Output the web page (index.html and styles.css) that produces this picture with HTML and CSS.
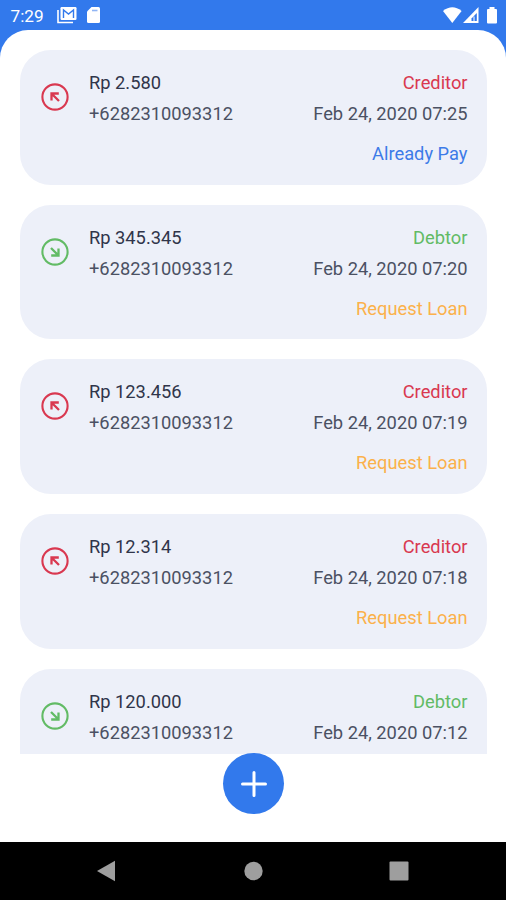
FILE: index.html
```
<!DOCTYPE html>
<html lang="en">
<head>
<meta charset="utf-8">
<title>Loans</title>
<link rel="stylesheet" href="styles.css">
</head>
<body>
<svg width="0" height="0" class="defs" aria-hidden="true">
  <symbol id="arrow" viewBox="0 0 28 28">
    <circle cx="14" cy="14" r="12.6" fill="none" stroke="currentColor" stroke-width="2.1"/>
    <path d="M17.800 10.500H10.500V17.600M10.700 10.700L18 18" fill="none" stroke="currentColor" stroke-width="2.300"/>
  </symbol>
</svg>
<header class="status">
  <span class="clock">7:29</span>
  <svg class="mail" width="20" height="17" viewBox="0 0 20 17"><path d="M1 3V15.500H16" fill="none" stroke="#fff" stroke-width="1.600"/><rect x="3.500" y="0" width="16" height="13" rx="1.200" fill="#fff"/><path d="M6.500 11V3L11.500 7L16.500 3V11" fill="none" stroke="#3279ec" stroke-width="1.400"/></svg>
  <svg class="sd" width="13" height="17" viewBox="0 0 13 17"><path d="M4.500 0H11.500Q13 0 13 1.500V14.500Q13 16 11.500 16H1.500Q0 16 0 14.500V4.500Z" fill="#fff"/><path d="M5 3.500H10.500" stroke="#91b5f4" stroke-width="1.600"/></svg>
  <svg class="signals" width="55" height="18" viewBox="0 0 55 18"><path d="M0 4Q9.300 -3.500 18.600 4L9.300 16Z" fill="#fff"/><path d="M35.500 0V16H20Z" fill="#fff"/><path d="M33.800 6V14H28.500V11.500Z" fill="#3279ec"/><path d="M31 9.500V14" stroke="#fff" stroke-width="1"/><path d="M46.500 0H51.500V2H53Q54 2 54 3V15.500Q54 16.500 53 16.500H45Q44 16.500 44 15.500V3Q44 2 45 2H46.500Z" fill="#fff"/></svg>
</header>
<main class="sheet">
  <div class="list">
    <article class="card">
      <svg class="icon red"><use href="#arrow"/></svg>
      <div class="rows">
        <div class="row"><span class="amount">Rp 2.580</span><span class="red">Creditor</span></div>
        <div class="row"><span>+6282310093312</span><span>Feb 24, 2020 07:25</span></div>
        <div class="row action blue">Already Pay</div>
      </div>
    </article>
    <article class="card">
      <svg class="icon green down"><use href="#arrow"/></svg>
      <div class="rows">
        <div class="row"><span class="amount">Rp 345.345</span><span class="green">Debtor</span></div>
        <div class="row"><span>+6282310093312</span><span>Feb 24, 2020 07:20</span></div>
        <div class="row action orange">Request Loan</div>
      </div>
    </article>
    <article class="card">
      <svg class="icon red"><use href="#arrow"/></svg>
      <div class="rows">
        <div class="row"><span class="amount">Rp 123.456</span><span class="red">Creditor</span></div>
        <div class="row"><span>+6282310093312</span><span>Feb 24, 2020 07:19</span></div>
        <div class="row action orange">Request Loan</div>
      </div>
    </article>
    <article class="card">
      <svg class="icon red"><use href="#arrow"/></svg>
      <div class="rows">
        <div class="row"><span class="amount">Rp 12.314</span><span class="red">Creditor</span></div>
        <div class="row"><span>+6282310093312</span><span>Feb 24, 2020 07:18</span></div>
        <div class="row action orange">Request Loan</div>
      </div>
    </article>
    <article class="card">
      <svg class="icon green down"><use href="#arrow"/></svg>
      <div class="rows">
        <div class="row"><span class="amount">Rp 120.000</span><span class="green">Debtor</span></div>
        <div class="row"><span>+6282310093312</span><span>Feb 24, 2020 07:12</span></div>
      </div>
    </article>
  </div>
  <button class="fab" aria-label="Add"><svg width="26" height="26" viewBox="0 0 26 26"><path d="M13 1.500V24.500M1.500 13H24.500" stroke="#fff" stroke-width="3" stroke-linecap="round"/></svg></button>
</main>
<nav class="nav">
  <svg width="20" height="22" viewBox="0 0 20 22"><path d="M1 11L19 .7V21.300Z"/></svg>
  <svg width="20" height="20" viewBox="0 0 20 20"><circle cx="10.500" cy="10" r="9.200"/></svg>
  <svg width="20" height="20" viewBox="0 0 20 20"><rect x=".5" y=".5" width="19" height="19" rx="1"/></svg>
</nav>
</body>
</html>
```
FILE: styles.css
```
* { box-sizing: border-box; }
body {
  margin: 0;
  height: 900px;
  display: flex;
  flex-direction: column;
  overflow: hidden;
  background: #3279ec;
  font-family: Roboto, sans-serif;
}
.defs { position: absolute; }
.status {
  height: 30px;
  flex: none;
  display: flex;
  align-items: flex-start;
  padding: 7px 8px 0 10.500px;
  color: #fff;
}
.clock { width: 46px; font-size: 17.200px; line-height: 18px; }
.sd { margin-left: 10px; }
.signals { margin-left: auto; }
.sheet {
  flex: 1;
  min-height: 0;
  padding: 20px 19px 0 20px;
  background: #fff;
  border-radius: 28px 28px 0 0;
  display: flex;
  flex-direction: column;
  align-items: center;
}
.list {
  width: 100%;
  height: 704px;
  flex: none;
  overflow: hidden;
  display: flex;
  flex-direction: column;
  gap: 20px;
}
.card {
  height: 134.700px;
  flex: none;
  display: flex;
  padding: 17px 19.500px 0 20px;
  border-radius: 31px;
  background: #edf0f9;
}
.icon { width: 28px; height: 28px; margin: 16px 20.500px 0 .5px; flex: none; }
.down { transform: rotate(180deg); }
.rows { flex: 1; }
.row {
  display: flex;
  justify-content: space-between;
  height: 31px;
  line-height: 31px;
  font-size: 18.300px;
  white-space: nowrap;
  color: #4b5163;
}
.amount { color: #30354a; }
.row.action { justify-content: flex-end; margin-top: 9px; }
.row .red, .red { color: #d93850; }
.row .green, .green { color: #62bb65; }
.row.blue { color: #3d7be8; }
.row.orange { color: #fbb14b; }
.fab {
  width: 61px;
  height: 61px;
  margin-top: -1px;
  padding: 0;
  border: 0;
  border-radius: 50%;
  background: #3279ec;
  display: grid;
  place-items: center;
  z-index: 1;
}
.nav {
  height: 58px;
  flex: none;
  display: flex;
  align-items: center;
  justify-content: space-between;
  padding: 0 97px 0 96px;
  background: #000;
  fill: #9e9e9e;
}
```
